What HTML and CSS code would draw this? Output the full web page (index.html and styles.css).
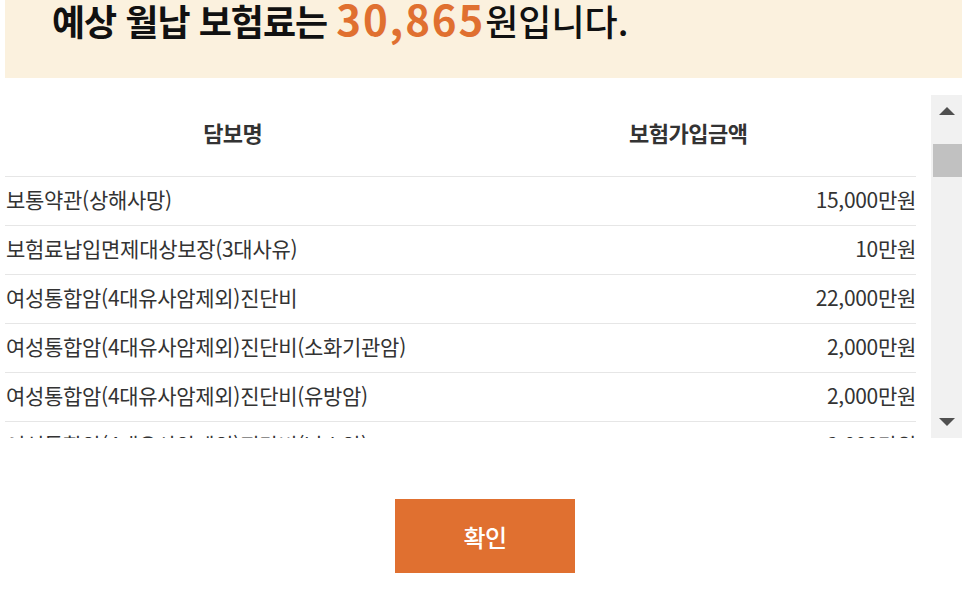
FILE: index.html
```html
<!DOCTYPE html>
<html lang="ko">
<head>
<meta charset="utf-8">
<link rel="stylesheet" href="styles.css">
</head>
<body>
<div class="banner">
  <p class="title">예상 월납 보험료는 <span class="amount">30,865</span><span class="tail">원입니다.</span></p>
</div>
<div class="scrollwrap">
  <div class="table-area">
    <div class="row head">
      <div class="cell name">담보명</div>
      <div class="cell value">보험가입금액</div>
    </div>
    <div class="row">
      <div class="cell name">보통약관(상해사망)</div>
      <div class="cell value">15,000만원</div>
    </div>
    <div class="row">
      <div class="cell name">보험료납입면제대상보장(3대사유)</div>
      <div class="cell value">10만원</div>
    </div>
    <div class="row">
      <div class="cell name">여성통합암(4대유사암제외)진단비</div>
      <div class="cell value">22,000만원</div>
    </div>
    <div class="row">
      <div class="cell name">여성통합암(4대유사암제외)진단비(소화기관암)</div>
      <div class="cell value">2,000만원</div>
    </div>
    <div class="row">
      <div class="cell name">여성통합암(4대유사암제외)진단비(유방암)</div>
      <div class="cell value">2,000만원</div>
    </div>
    <div class="row">
      <div class="cell name">여성통합암(4대유사암제외)진단비(난소암)</div>
      <div class="cell value">2,000만원</div>
    </div>
  </div>
  <div class="scrollbar">
    <div class="arrow up"></div>
    <div class="track"><div class="thumb"></div></div>
    <div class="arrow down"></div>
  </div>
</div>
<div class="actions">
  <button class="confirm">확인</button>
</div>
</body>
</html>
```

FILE: styles.css
```css
html, body {
  margin: 0;
  padding: 0;
  background: #ffffff;
  font-family: "Noto Sans CJK KR", "Noto Sans", sans-serif;
  color: #333333;
  overflow: hidden;
}

.banner {
  margin-left: 5px;
  height: 78px;
  background: #fbf1de;
  overflow: hidden;
}

.title {
  margin: 0;
  padding-left: 47px;
  font-size: 36px;
  font-weight: 700;
  letter-spacing: -1px;
  color: #111111;
  line-height: 36px;
  white-space: nowrap;
}

.amount {
  font-size: 42px;
  color: #e07030;
  letter-spacing: 1.9px;
}

.tail {
  font-weight: 500;
  letter-spacing: 0;
}

.scrollwrap {
  display: flex;
  margin-top: 17px;
  margin-left: 5px;
  height: 343px;
  gap: 15px;
}

.table-area {
  width: 911px;
  overflow: hidden;
}

.row {
  display: grid;
  grid-template-columns: 1fr 1fr;
  height: 48px;
  border-bottom: 1px solid #e6e6e6;
  align-items: center;
  font-size: 21px;
  letter-spacing: -0.3px;
  color: #333333;
}

.row.head {
  height: 81px;
  font-weight: 700;
  font-size: 22px;
  color: #333333;
  letter-spacing: -0.5px;
}

.cell {
  white-space: nowrap;
  line-height: 44px;
  padding-bottom: 4px;
}

.row .name {
  padding-left: 1px;
}

.row .value {
  text-align: right;
}

.row.head .name,
.row.head .value {
  text-align: center;
  padding-left: 0;
  padding-bottom: 8px;
  line-height: 64px;
}

.scrollbar {
  width: 31px;
  display: flex;
  flex-direction: column;
  background: #f1f1f1;
}

.arrow {
  height: 32px;
  display: flex;
  align-items: center;
  justify-content: center;
}

.arrow.up::before {
  content: "";
  border-left: 8px solid transparent;
  border-right: 8px solid transparent;
  border-bottom: 8px solid #505050;
}

.arrow.down::before {
  content: "";
  border-left: 8px solid transparent;
  border-right: 8px solid transparent;
  border-top: 8px solid #505050;
}

.track {
  flex: 1;
  padding-top: 17px;
  padding-left: 2px;
}

.thumb {
  height: 33px;
  background: #c1c1c1;
}

.actions {
  display: flex;
  justify-content: center;
  padding-left: 8px;
  margin-top: 61px;
}

.confirm {
  width: 180px;
  height: 74px;
  border: 0;
  background: #e07030;
  color: #ffffff;
  font-family: "Noto Sans CJK KR", "Noto Sans", sans-serif;
  font-size: 24px;
  font-weight: 500;
  letter-spacing: -0.5px;
  cursor: pointer;
}
```
